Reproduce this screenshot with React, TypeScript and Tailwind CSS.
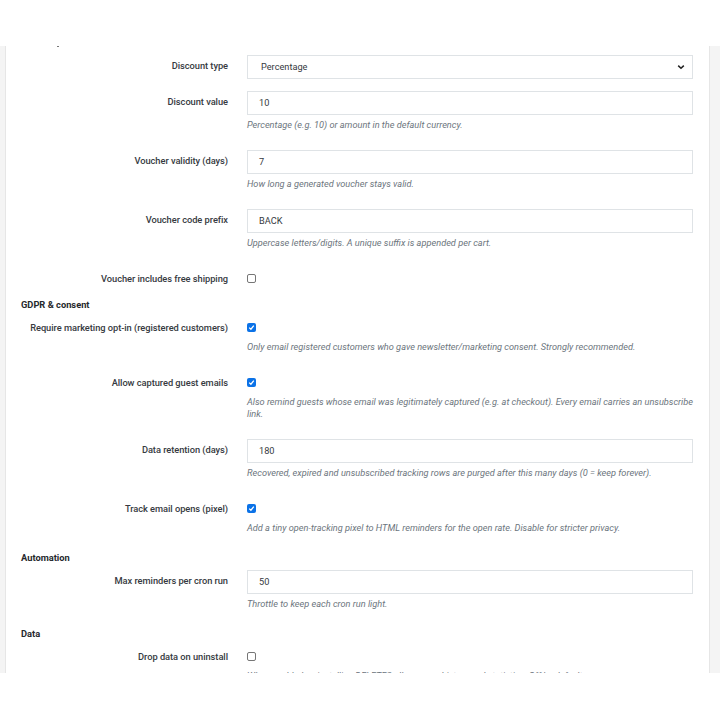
import React from "react";

const labelCls =
  "w-[207px] shrink-0 whitespace-nowrap text-right pt-[4px] text-[9.3px] leading-[14px] font-medium tracking-[-0.05px] text-[#363a41]";
const helpCls =
  "mt-[4px] mb-[7px] text-[9.2px] leading-[12px] italic text-[#6c757d]";
const inputCls =
  "h-[24px] w-full border border-[#dfe3e6] bg-white pl-[11px] pr-[12px] flex items-center text-[9.2px] text-[#363a41]";

function InputRow({ label, value, help, select }: { label: string; value: string; help?: string; select?: boolean }) {
  return (
    <div className="flex mb-[12px]">
      <div className={labelCls}>{label}</div>
      <div className="flex-1 ml-[19px]">
        <div className={inputCls}>
          <span className={select ? "flex-1 pl-[2px]" : "flex-1"}>{value}</span>
          {select && (
            <svg width="8" height="6" viewBox="0 0 8 6" className="mr-[-5px]">
              <path d="M1.2 1.6 L4 4.3 L6.8 1.6" fill="none" stroke="#222" strokeWidth="1.5" />
            </svg>
          )}
        </div>
        {help && <div className={helpCls}>{help}</div>}
      </div>
    </div>
  );
}

function Check({ checked }: { checked: boolean }) {
  if (checked) {
    return (
      <div className="w-[9px] h-[9px] rounded-[2px] bg-[#0b72e7] flex items-center justify-center">
        <svg width="7" height="7" viewBox="0 0 7 7">
          <path d="M1.2 3.6 L2.9 5.2 L5.8 1.6" fill="none" stroke="white" strokeWidth="1.3" />
        </svg>
      </div>
    );
  }
  return <div className="w-[9px] h-[9px] rounded-[2px] border border-[#767676] bg-white" />;
}

function CheckRow({ label, checked, help }: { label: string; checked: boolean; help?: string }) {
  return (
    <div className="flex mb-[12px]">
      <div className={labelCls}>{label}</div>
      <div className="flex-1 ml-[19px]">
        <div className="h-[20px] pt-[6px]">
          <Check checked={checked} />
        </div>
        {help && <div className={helpCls}>{help}</div>}
      </div>
    </div>
  );
}

function Heading({ children }: { children: React.ReactNode }) {
  return (
    <div className="mt-[-3px] mb-[5px] text-[9.3px] leading-[15px] font-bold text-[#25282c]">{children}</div>
  );
}

export default function App() {
  return (
    <div
      className="w-[720px] h-[720px] bg-white overflow-hidden"
      style={{ fontFamily: 'Roboto, "Liberation Sans", sans-serif' }}
    >
      <div className="h-[46px]" />
      <div className="flex h-[627px] overflow-hidden">
        <div className="w-[6px] shrink-0 bg-[#f4f4f4] border-r border-[#e6e6e6]" />
        <div className="flex-1 bg-white pl-[15px] pr-[16px]">
          <div className="h-[1px] w-[2px] ml-[36px] bg-[#777]" />
          <div className="pt-[8px]">
            <InputRow label="Discount type" value="Percentage" select />
            <InputRow label="Discount value" value="10" help="Percentage (e.g. 10) or amount in the default currency." />
            <InputRow label="Voucher validity (days)" value="7" help="How long a generated voucher stays valid." />
            <InputRow label="Voucher code prefix" value="BACK" help="Uppercase letters/digits. A unique suffix is appended per cart." />
            <CheckRow label="Voucher includes free shipping" checked={false} />
            <Heading>GDPR &amp; consent</Heading>
            <CheckRow
              label="Require marketing opt-in (registered customers)"
              checked
              help="Only email registered customers who gave newsletter/marketing consent. Strongly recommended."
            />
            <CheckRow
              label="Allow captured guest emails"
              checked
              help="Also remind guests whose email was legitimately captured (e.g. at checkout). Every email carries an unsubscribe link."
            />
            <InputRow
              label="Data retention (days)"
              value="180"
              help="Recovered, expired and unsubscribed tracking rows are purged after this many days (0 = keep forever)."
            />
            <CheckRow
              label="Track email opens (pixel)"
              checked
              help="Add a tiny open-tracking pixel to HTML reminders for the open rate. Disable for stricter privacy."
            />
            <Heading>Automation</Heading>
            <InputRow label="Max reminders per cron run" value="50" help="Throttle to keep each cron run light." />
            <Heading>Data</Heading>
            <CheckRow
              label="Drop data on uninstall"
              checked={false}
              help="When enabled, uninstalling DELETES all recovery history and statistics. Off by default."
            />
          </div>
        </div>
        <div className="w-[11px] shrink-0 bg-[#f4f4f4] border-l border-[#e6e6e6]" />
      </div>
    </div>
  );
}
